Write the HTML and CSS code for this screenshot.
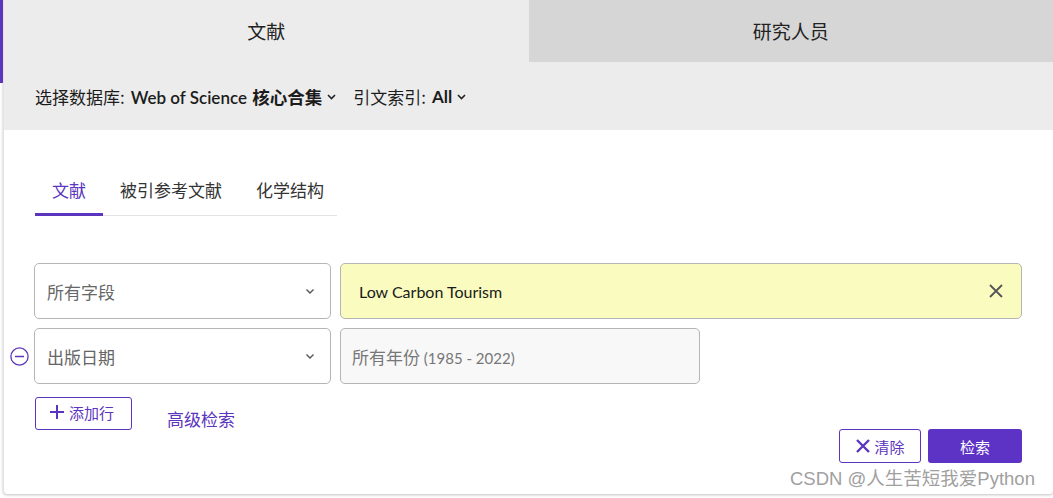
FILE: index.html
```html
<!DOCTYPE html>
<html lang="zh-CN">
<head>
<meta charset="utf-8">
<link rel="stylesheet" href="styles.css">
</head>
<body>
<div class="page">
  <div class="card">
    <div class="top-tabs">
      <div class="top-tab active">文献</div>
      <div class="top-tab">研究人员</div>
    </div>
    <div class="db-bar">
      <span class="db-label">选择数据库:</span>
      <span class="db-value">Web of Science <b class="bold">核心合集</b></span>
      <svg class="caret" width="9" height="6" viewBox="0 0 9 6"><path d="M1 1l3.5 3.5L8 1" fill="none" stroke="#222" stroke-width="1.6"/></svg>
      <span class="db-label gap">引文索引:</span>
      <span class="db-value"><b class="semi">All</b></span>
      <svg class="caret" width="9" height="6" viewBox="0 0 9 6"><path d="M1 1l3.5 3.5L8 1" fill="none" stroke="#222" stroke-width="1.6"/></svg>
    </div>
    <div class="body">
      <div class="sub-tabs">
        <div class="sub-tab active">文献</div>
        <div class="sub-tab">被引参考文献</div>
        <div class="sub-tab">化学结构</div>
      </div>
      <div class="rows">
        <div class="row">
          <div class="row-ctl"></div>
          <div class="select">
            <span>所有字段</span>
            <svg width="10" height="7" viewBox="0 0 10 7"><path d="M1.5 1.5l3.5 3.5 3.5-3.5" fill="none" stroke="#555" stroke-width="1.4"/></svg>
          </div>
          <div class="field filled">
            <span>Low Carbon Tourism</span>
            <svg width="16" height="16" viewBox="0 0 16 16"><path d="M2 2l12 12M14 2L2 14" stroke="#555" stroke-width="1.8"/></svg>
          </div>
        </div>
        <div class="row">
          <div class="row-ctl">
            <svg width="19" height="19" viewBox="0 0 19 19"><circle cx="9.5" cy="9.5" r="8.6" fill="none" stroke="#5b35bd" stroke-width="1.3"/><path d="M5 9.5h9" stroke="#5b35bd" stroke-width="1.4"/></svg>
          </div>
          <div class="select">
            <span>出版日期</span>
            <svg width="10" height="7" viewBox="0 0 10 7"><path d="M1.5 1.5l3.5 3.5 3.5-3.5" fill="none" stroke="#555" stroke-width="1.4"/></svg>
          </div>
          <div class="field date">
            <span>所有年份 <span class="num">(1985 - 2022)</span></span>
          </div>
        </div>
      </div>
      <div class="actions">
        <div class="left-actions">
          <button class="btn-outline add">
            <svg width="16" height="16" viewBox="0 0 16 16"><path d="M8 1v14M1 8h14" stroke="#5b35bd" stroke-width="2"/></svg>
            <span>添加行</span>
          </button>
          <a class="adv">高级检索</a>
        </div>
        <div class="right-actions">
          <button class="btn-outline clear">
            <svg width="16" height="16" viewBox="0 0 16 16"><path d="M2 2l12 12M14 2L2 14" stroke="#5b35bd" stroke-width="2.4"/></svg>
            <span>清除</span>
          </button>
          <button class="btn-primary">检索</button>
        </div>
      </div>
    </div>
  </div>
  <div class="watermark">CSDN @人生苦短我爱Python</div>
</div>
</body>
</html>
```
FILE: styles.css
```css
* { box-sizing: border-box; }
html, body { margin: 0; padding: 0; background: #fff; }
body {
  width: 1053px;
  height: 498px;
  overflow: hidden;
  font-family: "Lato", "Noto Sans CJK SC", sans-serif;
  color: #222;
}
.page {
  position: relative;
  padding-left: 3px;
  width: 1053px;
  height: 498px;
}
.page::before {
  content: "";
  position: absolute;
  left: 0; top: 0;
  width: 3px; height: 83px;
  background: #5b35bd;
}
.card {
  width: 1050px;
  height: 494px;
  background: #fff;
  border-left: 1px solid #e4e4e4;
  box-shadow: 0 1px 3px rgba(0,0,0,0.25);
  border-radius: 0 0 4px 4px;
  overflow: hidden;
}
.top-tabs {
  display: flex;
  height: 62px;
}
.top-tab {
  flex: 1;
  display: flex;
  align-items: center;
  justify-content: center;
  font-family: "Noto Sans CJK SC", sans-serif;
  font-size: 19px;
  color: #222;
  background: #d6d6d6;
  padding-bottom: 1px;
}
.top-tab.active { background: #ececec; }
.db-bar {
  height: 68px;
  background: #ececec;
  display: flex;
  align-items: center;
  padding-left: 31px;
  font-size: 17px;
  color: #1c1c1c;
}
.db-label { font-family: "Noto Sans CJK SC", sans-serif; margin-right: 6px; }
.db-label.gap { margin-left: 17px; }
.db-value { font-family: "Lato", "Noto Sans CJK SC", sans-serif; font-weight: 600; }
.bold { font-weight: 700; font-size: 17.5px; margin-left: 1px; }
.semi { font-weight: 700; }
.caret { margin-left: 5px; margin-top: 1px; }
.body {
  padding: 40px 0 0 30px;
}
.sub-tabs {
  display: flex;
  width: 302px;
  margin-left: 1px;
  border-bottom: 1px solid #e3e3e3;
  height: 46px;
}
.sub-tab {
  flex-shrink: 0;
  white-space: nowrap;
  font-family: "Noto Sans CJK SC", sans-serif;
  font-size: 17px;
  color: #333;
  padding: 8px 17px 0;
  line-height: 24px;
}
.sub-tab.active {
  color: #5b35bd;
  border-bottom: 3px solid #5b35bd;
  margin-bottom: -1px;
}
.rows {
  margin-top: 47px;
  display: flex;
  flex-direction: column;
  gap: 9px;
  margin-left: -30px;
}
.row {
  display: flex;
  align-items: center;
  gap: 9px;
  height: 56px;
}
.row-ctl {
  width: 30px;
  margin-right: -9px;
  display: flex;
  justify-content: center;
  padding-left: 1px;
}
.select {
  width: 297px;
  height: 56px;
  border: 1px solid #b5b5b5;
  border-radius: 5px;
  background: #fff;
  display: flex;
  align-items: center;
  justify-content: space-between;
  padding: 0 15px 0 12px;
  font-family: "Noto Sans CJK SC", sans-serif;
  font-size: 17px;
  color: #666;
}
.field {
  height: 56px;
  border: 1px solid #b5b5b5;
  border-radius: 5px;
  display: flex;
  align-items: center;
  justify-content: space-between;
}
.field.filled {
  width: 682px;
  background: #fafcbf;
  padding: 0 17px 0 18px;
  font-size: 16px;
  color: #1a1a1a;
}
.field.date {
  width: 360px;
  background: #f8f8f8;
  padding: 0 11px;
  font-family: "Noto Sans CJK SC", sans-serif;
  font-size: 17px;
  color: #777;
}
.num { font-family: "Lato", sans-serif; font-size: 15px; }
.actions {
  display: flex;
  align-items: flex-start;
  margin-top: 12px;
  padding-left: 1px;
  padding-right: 31px;
}
.left-actions {
  display: flex;
  align-items: center;
}
.btn-outline {
  background: #fff;
  border: 1px solid #5b35bd;
  border-radius: 3px;
  color: #5b35bd;
  font-family: "Noto Sans CJK SC", sans-serif;
  font-size: 15px;
  display: flex;
  align-items: center;
  gap: 4px;
  padding: 0;
  cursor: pointer;
}
.add {
  width: 97px;
  height: 33px;
  padding-left: 13px;
  padding-bottom: 3px;
}
.adv {
  margin-left: 35px;
  margin-top: 10px;
  font-family: "Noto Sans CJK SC", sans-serif;
  font-size: 17px;
  color: #5b35bd;
}
.right-actions {
  margin-left: auto;
  margin-top: 33px;
  display: flex;
  gap: 7px;
}
.clear {
  width: 82px;
  height: 34px;
  justify-content: center;
  gap: 3px;
}
.btn-primary {
  width: 94px;
  height: 34px;
  background: #5d33c6;
  border: none;
  border-radius: 3px;
  color: #fff;
  font-family: "Noto Sans CJK SC", sans-serif;
  font-size: 15px;
  padding: 0;
}
.watermark {
  position: absolute;
  left: 790px;
  top: 464px;
  font-family: "Liberation Sans", "Noto Sans CJK SC", sans-serif;
  font-size: 18.5px;
  color: #a0a0a0;
  white-space: nowrap;
}
```
